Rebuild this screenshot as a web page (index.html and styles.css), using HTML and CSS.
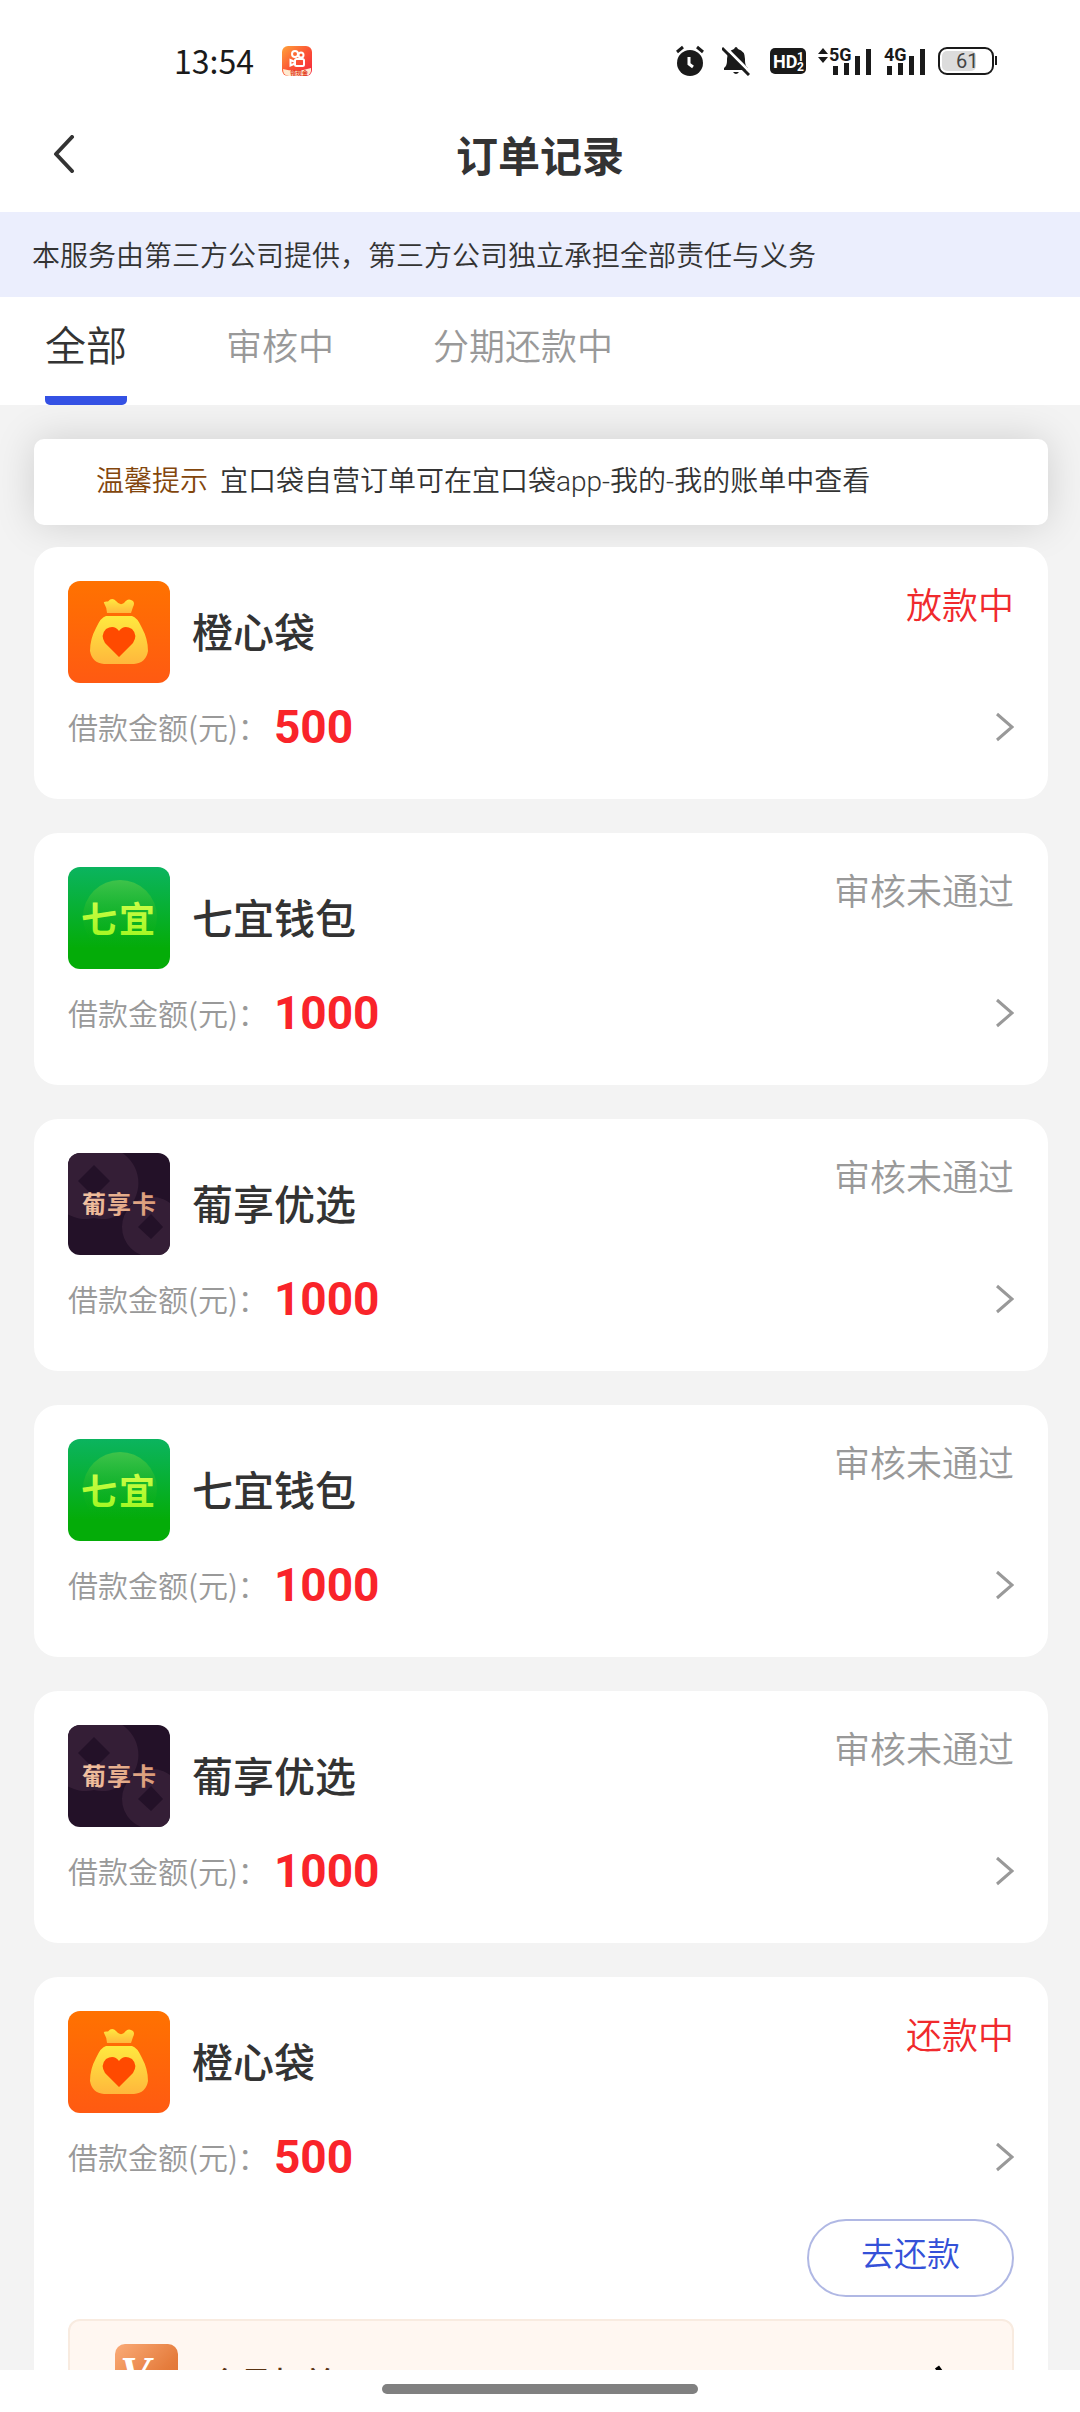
FILE: index.html
```html
<!DOCTYPE html>
<html lang="zh-CN">
<head>
<meta charset="utf-8">
<meta name="viewport" content="width=device-width, initial-scale=1">
<title>订单记录</title>
<link rel="stylesheet" href="styles.css">
</head>
<body>
<svg class="defs" aria-hidden="true">
  <defs>
    <linearGradient id="orange" x1="0" y1="0" x2="0" y2="1"><stop offset="0" stop-color="#ff7200"/><stop offset="1" stop-color="#ff5a12"/></linearGradient>
    <linearGradient id="gold" x1="0" y1="0" x2="0" y2="1"><stop offset="0" stop-color="#ffe93f"/><stop offset="1" stop-color="#ffb73c"/></linearGradient>
    <linearGradient id="green" x1="0" y1="0" x2="0" y2="1"><stop offset="0" stop-color="#0bb45f"/><stop offset=".8" stop-color="#04ac08"/><stop offset="1" stop-color="#04ac08"/></linearGradient>
    <linearGradient id="glow" x1="0" y1="0" x2="0" y2="1"><stop offset="0" stop-color="#3fc34a"/><stop offset=".9" stop-color="#04ac08" stop-opacity="0"/></linearGradient>
    <linearGradient id="lime" x1="0" y1="0" x2="0" y2="1"><stop offset="0" stop-color="#d8ff52"/><stop offset="1" stop-color="#9cf61c"/></linearGradient>
    <linearGradient id="copper" x1="0" y1="0" x2="1" y2="0"><stop offset="0" stop-color="#f3c3a2"/><stop offset="1" stop-color="#d99a78"/></linearGradient>
    <linearGradient id="member" x1="0" y1="0" x2="1" y2="1"><stop offset="0" stop-color="#faab78"/><stop offset=".6" stop-color="#e57c3c"/><stop offset="1" stop-color="#dd6d2c"/></linearGradient>
    <linearGradient id="video" x1="0" y1="0" x2="1" y2="1"><stop offset="0" stop-color="#ffa33a"/><stop offset=".5" stop-color="#fb5434"/><stop offset="1" stop-color="#f5223f"/></linearGradient>
    <symbol id="logo-bag" viewBox="0 0 102 102">
      <rect width="102" height="102" fill="url(#orange)"/>
      <path fill="url(#gold)" d="M36 22Q35 20 40 20.500Q44 16 48 20Q52 25 56 22Q60 16 65 20Q67 22 65 26L63 32H39Q39 27 36 22Z"/>
      <path fill="url(#gold)" d="M38 35H64Q69 36 74 47Q80 58 80 70Q78 82 66 83H36Q24 82 22 70Q22 58 28 47Q33 36 38 35Z"/>
      <path fill="#ff4a00" d="M51 76L37 62Q32 54 38 48Q46 43 51 50Q56 43 64 48Q70 54 65 62Z"/>
    </symbol>
    <symbol id="logo-qiyi" viewBox="0 0 102 102">
      <rect width="102" height="102" fill="url(#green)"/>
      <circle cx="52" cy="50" r="37" fill="url(#glow)"/>
      <text class="logo-text" x="13 51" y="66" font-size="36" fill="url(#lime)">七宜</text>
    </symbol>
    <symbol id="logo-puxiang" viewBox="0 0 102 102">
      <rect width="102" height="102" fill="#231128"/>
      <g fill="#341e36" fill-rule="evenodd">
        <path d="M26-5a36 36 0 1 1 0 70a36 36 0 1 1 0-70M26 12L10 28L26 44L42 28Z"/>
        <path d="M84 44a30 30 0 1 1 0 60a30 30 0 1 1 0-60M83 61L70 74L83 86L95 74Z"/>
      </g>
      <text class="logo-text" x="14 39 64" y="60" font-size="24" fill="url(#copper)">葡享卡</text>
    </symbol>
    <symbol id="chevron" viewBox="0 0 18 30"><path d="M1 2L16 15L1 28" fill="none" stroke="#999" stroke-width="3"/></symbol>
  </defs>
</svg>
<div class="app">
  <div class="status-bar">
    <div class="status-left">
      <time>13:54</time>
      <svg width="30" height="30" viewBox="0 0 30 30" aria-hidden="true">
        <rect width="30" height="30" rx="6" fill="url(#video)"/>
        <path d="M1 23Q14 27 29 22V25Q28 30 23 30H7Q1 30 1 23Z" fill="#ffe9cf"/>
        <g fill="none" stroke="#fff" stroke-width="2"><circle cx="13" cy="8" r="3"/><circle cx="19" cy="9" r="2.500"/><rect x="13" y="13" width="9" height="7" rx="1.500"/><path d="M13 16L8.500 14V19.500L13 17.500"/></g>
        <text class="signal-text" x="8" y="29" font-size="6" fill="#e33a20">领现金</text>
      </svg>
    </div>
    <div class="status-right">
      <svg class="alarm" width="28" height="32" viewBox="0 0 28 32" role="img" aria-label="闹钟"><circle cx="14" cy="18" r="13" fill="#1a1a1a"/><path d="M1 7L7 2M27 7L21 2" stroke="#1a1a1a" stroke-width="3"/><path d="M13 12V19L17 22" fill="none" stroke="#fff" stroke-width="3"/></svg>
      <svg class="bell" width="28" height="30" viewBox="0 0 28 30" role="img" aria-label="静音"><path d="M2 22Q5 20 5 15V13Q5 5 12 3Q14-1 16 3Q23 5 23 13V15Q23 20 26 22V24H2ZM11 26H17Q14 30 11 26" fill="#1a1a1a"/><path d="M2 0L29 27" stroke="#fff" stroke-width="3"/><path d="M0 2L27 29" stroke="#1a1a1a" stroke-width="3"/></svg>
      <svg class="hd" width="36" height="26" viewBox="0 0 36 26"><rect width="36" height="26" rx="5" fill="#1a1a1a"/><text class="signal-text" x="3" y="20" font-size="18" fill="#fff">HD</text><text class="signal-text" x="27" y="13" font-size="12" fill="#fff">1</text><text class="signal-text" x="27" y="23" font-size="12" fill="#fff">2</text></svg>
      <svg class="net" width="54" height="30" viewBox="0 0 54 30"><path d="M0 8L5 2L10 8ZM0 11H10L5 17Z" fill="#1a1a1a"/><path d="M15 20h5v9h-5zM26 17h5v12h-5zM37 10h5v19h-5zM48 3h5v26h-5z" fill="#1a1a1a"/><text class="signal-text" x="11" y="15" font-size="18" fill="#1a1a1a">5G</text></svg>
      <svg class="net" width="42" height="30" viewBox="0 0 42 30"><path d="M3 20h5v9H3zM14 17h5v12h-5zM25 10h5v19h-5zM36 3h5v26h-5z" fill="#1a1a1a"/><text class="signal-text" x="0" y="15" font-size="18" fill="#1a1a1a">4G</text></svg>
      <svg width="60" height="28" viewBox="0 0 60 28"><rect x="4" y="4" width="34" height="20" rx="5" fill="#dcdcdc"/><rect x="1" y="1" width="54" height="26" rx="8" fill="none" stroke="#1a1a1a" stroke-width="2"/><rect x="57" y="9" width="2" height="9" fill="#1a1a1a"/><text class="battery-text" x="18" y="21" font-size="20" fill="#444">61</text></svg>
    </div>
  </div>
  <header class="title-bar">
    <button class="back" type="button" aria-label="返回"><svg width="22" height="38" viewBox="0 0 22 38"><path d="M19 2L3 19L19 36" fill="none" stroke="#333" stroke-width="4" stroke-linecap="round" stroke-linejoin="round"/></svg></button>
    <h1>订单记录</h1>
  </header>
  <p class="notice">本服务由第三方公司提供，第三方公司独立承担全部责任与义务</p>
  <nav class="tabs">
    <a class="tab active" href="#all" aria-current="page">全部</a>
    <a class="tab" href="#review">审核中</a>
    <a class="tab" href="#repay">分期还款中</a>
  </nav>
  <main class="content">
    <p class="tip"><strong>温馨提示</strong><span>宜口袋自营订单可在宜口袋app-我的-我的账单中查看</span></p>
    <section class="orders">
      <article class="card">
        <div class="card-head"><svg class="logo" aria-hidden="true"><use href="#logo-bag"/></svg><h2>橙心袋</h2><span class="state alert">放款中</span></div>
        <a class="amount" href="#order-1"><span class="label">借款金额(元)：</span><b>500</b><svg class="chevron" aria-hidden="true"><use href="#chevron"/></svg></a>
      </article>
      <article class="card">
        <div class="card-head"><svg class="logo" aria-hidden="true"><use href="#logo-qiyi"/></svg><h2>七宜钱包</h2><span class="state">审核未通过</span></div>
        <a class="amount" href="#order-2"><span class="label">借款金额(元)：</span><b>1000</b><svg class="chevron" aria-hidden="true"><use href="#chevron"/></svg></a>
      </article>
      <article class="card">
        <div class="card-head"><svg class="logo" aria-hidden="true"><use href="#logo-puxiang"/></svg><h2>葡享优选</h2><span class="state">审核未通过</span></div>
        <a class="amount" href="#order-3"><span class="label">借款金额(元)：</span><b>1000</b><svg class="chevron" aria-hidden="true"><use href="#chevron"/></svg></a>
      </article>
      <article class="card">
        <div class="card-head"><svg class="logo" aria-hidden="true"><use href="#logo-qiyi"/></svg><h2>七宜钱包</h2><span class="state">审核未通过</span></div>
        <a class="amount" href="#order-4"><span class="label">借款金额(元)：</span><b>1000</b><svg class="chevron" aria-hidden="true"><use href="#chevron"/></svg></a>
      </article>
      <article class="card">
        <div class="card-head"><svg class="logo" aria-hidden="true"><use href="#logo-puxiang"/></svg><h2>葡享优选</h2><span class="state">审核未通过</span></div>
        <a class="amount" href="#order-5"><span class="label">借款金额(元)：</span><b>1000</b><svg class="chevron" aria-hidden="true"><use href="#chevron"/></svg></a>
      </article>
      <article class="card">
        <div class="card-head"><svg class="logo" aria-hidden="true"><use href="#logo-bag"/></svg><h2>橙心袋</h2><span class="state alert">还款中</span></div>
        <a class="amount" href="#order-6"><span class="label">借款金额(元)：</span><b>500</b><svg class="chevron" aria-hidden="true"><use href="#chevron"/></svg></a>
        <button class="repay" type="button">去还款</button>
        <a class="member" href="#member">
          <svg width="63" height="63" viewBox="0 0 63 63" aria-hidden="true"><rect width="63" height="63" rx="10" fill="url(#member)"/><text class="member-mark" x="5" y="45" font-size="46" fill="#fff">V</text></svg>
          <span>会员权益</span>
          <svg class="member-arrow" width="20" height="44" viewBox="0 0 20 44" aria-hidden="true"><path d="M3 4L16 22L3 40" fill="none" stroke="#000" stroke-width="5"/></svg>
        </a>
      </article>
    </section>
  </main>
  <footer class="home-bar"><span class="home-pill"></span></footer>
</div>
</body>
</html>
```

FILE: styles.css
```css
* {
  box-sizing: border-box;
}

body,
h1,
h2,
p {
  margin: 0;
}

body {
  background: #fff;
  color: #333;
  font-family: "Noto Sans CJK SC", sans-serif;
  font-size: 28px;
  font-weight: 350;
}

a {
  color: inherit;
  text-decoration: none;
}

button {
  background: none;
  border: 0;
  font: inherit;
  padding: 0;
}

svg {
  display: block;
  flex: none;
}

.defs {
  height: 0;
  position: absolute;
  width: 0;
}

.app {
  display: flex;
  flex-direction: column;
  height: 100vh;
}

.app > * {
  flex: none;
}

/* System status bar */
.status-bar {
  align-items: center;
  color: #1a1a1a;
  display: flex;
  height: 102px;
  justify-content: space-between;
  padding: 20px 82px 0 174px;
}

.status-left,
.status-right {
  align-items: center;
  display: flex;
}

.status-left {
  font-size: 32px;
  font-weight: 400;
  gap: 28px;
  line-height: 36px;
}

.status-left time {
  padding-bottom: 2px;
}

.alarm {
  margin-right: 18px;
}

.bell {
  margin-right: 20px;
}

.hd {
  margin-right: 12px;
}

.net {
  margin-right: 12px;
}

.signal-text {
  font-family: Roboto, "Noto Sans CJK SC", sans-serif;
  font-weight: 700;
}

.battery-text {
  font-family: Roboto, sans-serif;
  font-weight: 400;
}

.logo-text {
  font-family: "Noto Sans CJK SC", sans-serif;
  font-weight: 700;
}

/* Page title */
.title-bar {
  align-items: center;
  display: grid;
  grid-template-columns: 1fr auto 1fr;
  height: 110px;
  padding: 0 53px 6px;
}

.back {
  justify-self: start;
}

h1 {
  font-size: 42px;
  font-weight: 700;
  line-height: 60px;
}

.notice {
  background: #ebeefd;
  line-height: 41px;
  padding: 22px 32px;
}

.tabs {
  display: flex;
  gap: 99px;
  padding: 0 45px;
}

.tab {
  color: #999;
  font-size: 36px;
  line-height: 95px;
  padding-bottom: 4px;
}

.tab.active {
  background: linear-gradient(#3451e4, #3451e4) bottom / 100% 9px no-repeat border-box;
  border-bottom: 9px solid transparent;
  border-radius: 5px;
  color: #333;
  font-size: 41px;
  line-height: 93px;
  padding-bottom: 6px;
}

/* Order list */
.content {
  background: #f3f3f3;
  flex: 1;
  min-height: 0;
  overflow: hidden;
  padding: 34px 32px 0 34px;
}

.tip {
  background: #fff;
  border-radius: 10px;
  box-shadow: 0 0 40px rgba(0, 0, 0, 0.15);
  display: flex;
  font-family: Roboto, "Noto Sans CJK SC", sans-serif;
  gap: 12px;
  line-height: 42px;
  margin-bottom: 22px;
  padding: 22px 62px;
}

.tip strong {
  color: #83460c;
  font-weight: inherit;
}

.orders {
  display: grid;
  gap: 34px;
  position: relative;
}

.card {
  background: #fff;
  border-radius: 24px;
  padding: 34px 34px 42px;
}

.card-head {
  align-items: center;
  display: flex;
}

.logo {
  border-radius: 12px;
  height: 102px;
  margin-right: 22px;
  width: 102px;
}

h2 {
  flex: 1;
  font-size: 41px;
  font-weight: 500;
  line-height: 60px;
  padding-bottom: 4px;
}

.state {
  align-self: flex-start;
  color: #999;
  font-size: 36px;
  line-height: 44px;
}

.state.alert {
  color: #f02a2d;
}

.amount {
  align-items: center;
  display: flex;
  gap: 6px;
  line-height: 58px;
  margin-top: 14px;
}

.label {
  color: #999;
  font-size: 30px;
  padding-bottom: 2px;
}

.amount b {
  color: #f9242a;
  flex: 1;
  font-family: Roboto, sans-serif;
  font-size: 46px;
  font-weight: 700;
}

.chevron {
  height: 30px;
  width: 18px;
}

.repay {
  border: 2px solid #b0b8e4;
  border-radius: 39px;
  color: #3451d8;
  display: block;
  font-size: 33px;
  line-height: 62px;
  margin: 32px 0 22px auto;
  padding: 0 52px 12px;
}

.member {
  align-items: flex-end;
  background: #fff7f1;
  border: 2px solid #f8ebe0;
  border-radius: 12px;
  color: #5a3413;
  display: flex;
  font-size: 32px;
  font-weight: 500;
  line-height: 52px;
  padding: 23px 58px 23px 45px;
}

.member span {
  flex: 1;
  padding-left: 30px;
}

.member-mark {
  font-family: "Liberation Serif", serif;
  font-style: italic;
  font-weight: 700;
}

/* Gesture navigation area */
.home-bar {
  background: #fff;
  padding: 14px 0 18px;
}

.home-pill {
  background: #808080;
  border-radius: 5px;
  display: block;
  height: 10px;
  margin: 0 auto;
  width: 316px;
}
```
